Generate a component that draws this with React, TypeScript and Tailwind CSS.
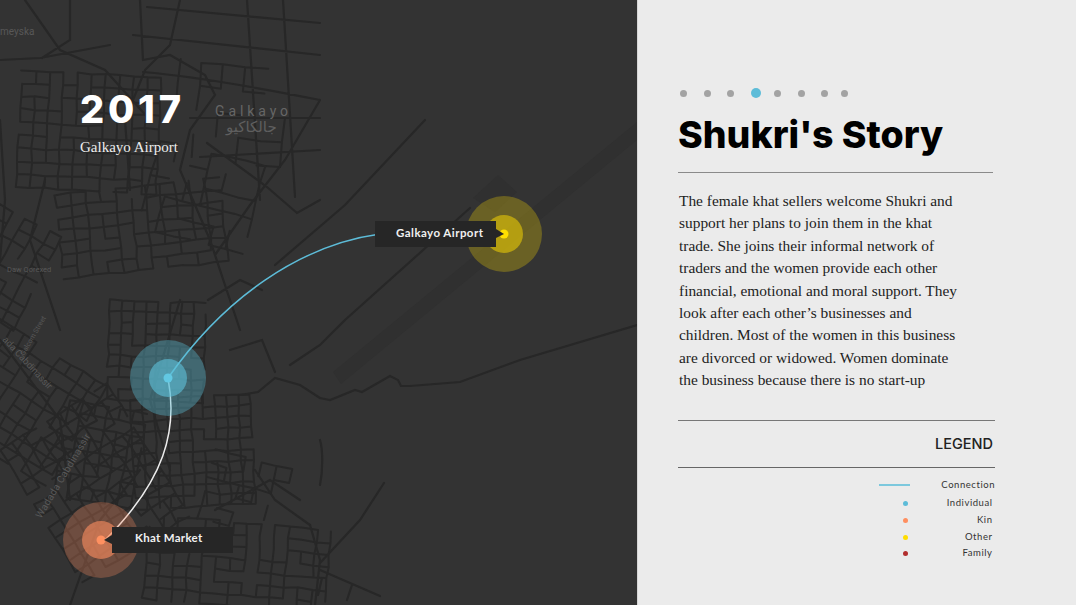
const ROAD = '#272727';

// deterministic jitter so the street net stays the same between renders
function makeRand(seed: number) {
  let s = seed;
  return () => {
    s = (s * 16807) % 2147483647;
    return (s - 1) / 2147483646;
  };
}

type Cluster = { x: number; y: number; nx: number; ny: number; sx: number; sy: number; angle: number; keep: number; seed: number };

const clusters: Cluster[] = [
  { x: 22, y: 70, nx: 11, ny: 10, sx: 14, sy: 13, angle: 3, keep: 0.92, seed: 11 },
  { x: 55, y: 195, nx: 12, ny: 8, sx: 15, sy: 12, angle: -6, keep: 0.85, seed: 23 },
  { x: 0, y: 205, nx: 6, ny: 9, sx: 14, sy: 13, angle: 28, keep: 0.78, seed: 37 },
  { x: 0, y: 320, nx: 10, ny: 10, sx: 14, sy: 13, angle: 32, keep: 0.8, seed: 41 },
  { x: 110, y: 300, nx: 9, ny: 10, sx: 12, sy: 11, angle: 2, keep: 0.88, seed: 53 },
  { x: 130, y: 400, nx: 11, ny: 11, sx: 12, sy: 11, angle: -3, keep: 0.85, seed: 67 },
  { x: 0, y: 450, nx: 10, ny: 13, sx: 14, sy: 13, angle: -32, keep: 0.82, seed: 71 },
  { x: 70, y: 400, nx: 7, ny: 9, sx: 13, sy: 12, angle: 10, keep: 0.78, seed: 79 },
  { x: 150, y: 515, nx: 14, ny: 8, sx: 14, sy: 12, angle: 5, keep: 0.74, seed: 83 },
  { x: 215, y: 450, nx: 6, ny: 6, sx: 16, sy: 14, angle: 14, keep: 0.55, seed: 97 },
  { x: 180, y: 60, nx: 6, ny: 5, sx: 22, sy: 24, angle: 6, keep: 0.45, seed: 101 },
  { x: 160, y: 140, nx: 7, ny: 6, sx: 18, sy: 18, angle: 14, keep: 0.62, seed: 113 },
];

function clusterPaths(c: Cluster) {
  const rand = makeRand(c.seed * 1013);
  const rad = (c.angle * Math.PI) / 180;
  const cos = Math.cos(rad);
  const sin = Math.sin(rad);
  const nodes: string[][] = [];
  for (let j = 0; j < c.ny; j++) {
    nodes[j] = [];
    for (let i = 0; i < c.nx; i++) {
      const dx = i * c.sx + rand() * 2 - 1;
      const dy = j * c.sy + rand() * 2 - 1;
      nodes[j][i] = `${(c.x + dx * cos - dy * sin).toFixed(1)} ${(c.y + dx * sin + dy * cos).toFixed(1)}`;
    }
  }
  let d = '';
  for (let j = 0; j < c.ny; j++) {
    for (let i = 0; i < c.nx; i++) {
      if (i + 1 < c.nx && rand() < c.keep) d += `M${nodes[j][i]}L${nodes[j][i + 1]}`;
      if (j + 1 < c.ny && rand() < c.keep) d += `M${nodes[j][i]}L${nodes[j + 1][i]}`;
    }
  }
  return d;
}

const mainRoads = [
  'M147 7L320 23',
  'M133 35L320 55',
  'M143 72C190 76 260 88 320 100',
  'M190 118L320 118',
  'M200 157L320 150',
  'M247 0L260 200',
  'M283 0L295 197',
  'M207 143L267 187L297 213L320 200',
  'M180 0L170 45L145 70L125 120L130 190',
  'M140 0L143 60L170 55L205 75L215 95L190 130L180 170L210 240L240 330',
  'M25 0L60 50L105 70L150 120',
  'M70 0L70 40L42 58',
  'M0 60L40 58L110 45',
  'M320 100L285 160L250 205L215 255',
  'M425 120L345 205L275 265',
  'M470 208L345 320L320 345L290 365',
  'M320 398L330 400L355 390L362 392L390 376L398 380L401 386L410 386L460 382L520 360L637 325',
  'M320 398L300 385L275 378L258 392L240 395',
  'M384 483L360 520L320 563',
  'M320 440C323 450 323 470 320 485',
  'M320 570L380 596',
  'M322 578L318 595M352 585L347 600',
  'M255 470L275 500L310 525L320 560L315 605',
  'M215 510L270 480L300 500',
  'M230 350L262 340L275 372',
  'M208 300L240 280L262 290',
  'M0 120L5 200L0 260',
  'M0 340L60 420L70 500',
  'M45 180L30 240L60 330',
  'M180 300L150 400L170 470',
  'M70 605L100 520L140 470',
];

function MapLayer() {
  return (
    <svg viewBox="0 0 637 605" className="absolute inset-0 h-full w-full">
      <path d="M333 372L637 122V140L341 384Z" fill="#303030" />
      <path d="M473 198L498 175L517 192L495 212Z" fill="#303030" />
      <g fill="none" stroke={ROAD} strokeWidth="2" strokeLinecap="round">
        {clusters.map((c) => (
          <path key={c.seed} d={clusterPaths(c)} />
        ))}
        <path d={mainRoads.join('')} strokeWidth="2.2" />
      </g>
      <g fill="#585858" fontFamily="Roboto, sans-serif">
        <text x="0" y="35" fontSize="10">meyska</text>
        <text x="7" y="272" fontSize="7.5">Daw Qorexed</text>
        <text x="215" y="116" fontSize="14" letterSpacing="3.9" fill="#666666">Galkayo</text>
        <text x="226" y="132" fontSize="15" fill="#5f5f5f" fontFamily="'DejaVu Sans', sans-serif">جالكاكيو</text>
        <text x="2" y="340" fontSize="9.5" transform="rotate(47 2 340)">ada Cabdinassir</text>
        <text x="24" y="356" fontSize="7" transform="rotate(-60 24 356)">Galcom Street</text>
        <text x="41" y="519" fontSize="10" letterSpacing="0.3" transform="rotate(-59 41 519)">Wadada Cabdinassir</text>
      </g>
      <path d="M168 378C224 298 300 245 380 234" fill="none" stroke="#5dbcd8" strokeWidth="1.5" />
      <path d="M168 378C178 430 165 480 105 540" fill="none" stroke="#ececec" strokeWidth="1.5" />
      <circle cx="504" cy="234" r="38" fill="#ffdd00" fillOpacity="0.27" />
      <circle cx="504" cy="234" r="19" fill="#ffdd00" fillOpacity="0.5" />
      <circle cx="504" cy="234" r="4.5" fill="#ffe000" />
      <circle cx="168" cy="378" r="38" fill="#5dc0d8" fillOpacity="0.38" />
      <circle cx="168" cy="378" r="19" fill="#5dc0d8" fillOpacity="0.62" />
      <circle cx="168" cy="378" r="4.5" fill="#62c8e2" />
      <circle cx="101" cy="540" r="38" fill="#ff8f60" fillOpacity="0.29" />
      <circle cx="101" cy="540" r="19" fill="#ff8f60" fillOpacity="0.6" />
      <circle cx="101" cy="540" r="4.5" fill="#ff9060" />
      <path d="M496 229L504 234L496 238Z" fill="#262626" />
      <path d="M112 535L104 540L112 544Z" fill="#262626" />
    </svg>
  );
}

const dots = ['a', 'b', 'c', 'active', 'd', 'e', 'f', 'g'];

const legend = [
  { label: 'Individual', color: 'bg-[#5dbcd8]', mt: 'mt-[5px]' },
  { label: 'Kin', color: 'bg-[#ff8f60]', mt: 'mt-[3px]' },
  { label: 'Other', color: 'bg-[#ffdd00]', mt: 'mt-[3px]' },
  { label: 'Family', color: 'bg-[#b22e2e]', mt: 'mt-[2px]' },
];

export default function App() {
  return (
    <div className="flex h-[605px] w-[1076px] overflow-hidden bg-[#ebebeb]">
      {/* Map side */}
      <section className="relative h-full w-[637px] shrink-0 bg-[#333333]">
        <MapLayer />
        <div className="absolute left-[80px] top-[87px]">
          <h1 className="font-['Inter',sans-serif] text-[38px] font-extrabold leading-[44px] tracking-[3.8px] text-white">2017</h1>
          <p className="mt-[6px] font-['Liberation_Serif',serif] text-[15px] leading-5 text-[#ececec]">Galkayo Airport</p>
        </div>
        <div className="absolute left-[375px] top-[221px] flex h-[26px] w-[121px] items-center bg-[#262626] pb-[2px] pl-[21px] font-['Lato',sans-serif] text-[11.5px] font-bold tracking-[0.45px] text-[#f0f0f0]">
          Galkayo Airport
        </div>
        <div className="absolute left-[112px] top-[527px] flex h-[26px] w-[121px] items-center bg-[#262626] pb-[4px] pl-[23px] font-['Lato',sans-serif] text-[11.5px] font-bold tracking-[0.3px] text-[#f0f0f0]">
          Khat Market
        </div>
      </section>

      {/* Story side */}
      <section className="flex-1 border-l border-[#d6d6d6] pl-[40px] pr-[81px] pt-[88px]">
        <div className="flex items-center gap-[16.5px] pl-[2px]">
          {dots.map((d) =>
            d === 'active' ? (
              <span key={d} className="h-[10px] w-[10px] rounded-full bg-[#5dbcd8]" />
            ) : (
              <span
                key={d}
                className={`h-[7px] w-[7px] rounded-full bg-[#a3a3a3] ${d === 'd' ? '-ml-[3px]' : ''} ${d === 'g' ? '-ml-[4px]' : ''}`}
              />
            ),
          )}
        </div>
        <h2 className="mt-[14px] h-[54px] font-['Inter',sans-serif] text-[37.5px] font-extrabold leading-[46px] text-black">Shukri&#39;s Story</h2>
        <div className="mt-[6px] mr-[2px] h-px bg-[#8a8a8a]" />
        <p className="mt-[17px] h-[202px] w-[290px] overflow-hidden pl-[1px] font-['Liberation_Serif',serif] text-[15.4px] leading-[22.4px] text-[#222222]">
          The female khat sellers welcome Shukri and support her plans to join them in the khat trade. She joins their informal network of traders and the women provide each other financial, emotional and moral support. They look after each other’s businesses and children. Most of the women in this business are divorced or widowed. Women dominate the business because there is no start-up
        </p>
        <div className="mt-[28px] border-t border-[#777777] pl-[1px]">
          <div className="flex h-[46px] items-center justify-end pr-[2px] font-['Inter',sans-serif] text-[14.5px] font-medium text-[#222222]">LEGEND</div>
        </div>
        <div className="border-t border-[#666666] pt-[11px] font-['Lato',sans-serif] text-[9.5px] tracking-[0.55px] text-[#333333]">
          <div className="flex h-[12px] items-center justify-end">
            <span className="mr-[31px] h-[2px] w-[31px] bg-[#7cc8dd]" />
            <span>Connection</span>
          </div>
          {legend.map((row) => (
            <div key={row.label} className={`relative flex h-[14px] items-center justify-end pr-[2.5px] ${row.mt}`}>
              <span className={`absolute left-[225px] h-[5px] w-[5px] rounded-full ${row.color}`} />
              <span>{row.label}</span>
            </div>
          ))}
        </div>
      </section>
    </div>
  );
}
